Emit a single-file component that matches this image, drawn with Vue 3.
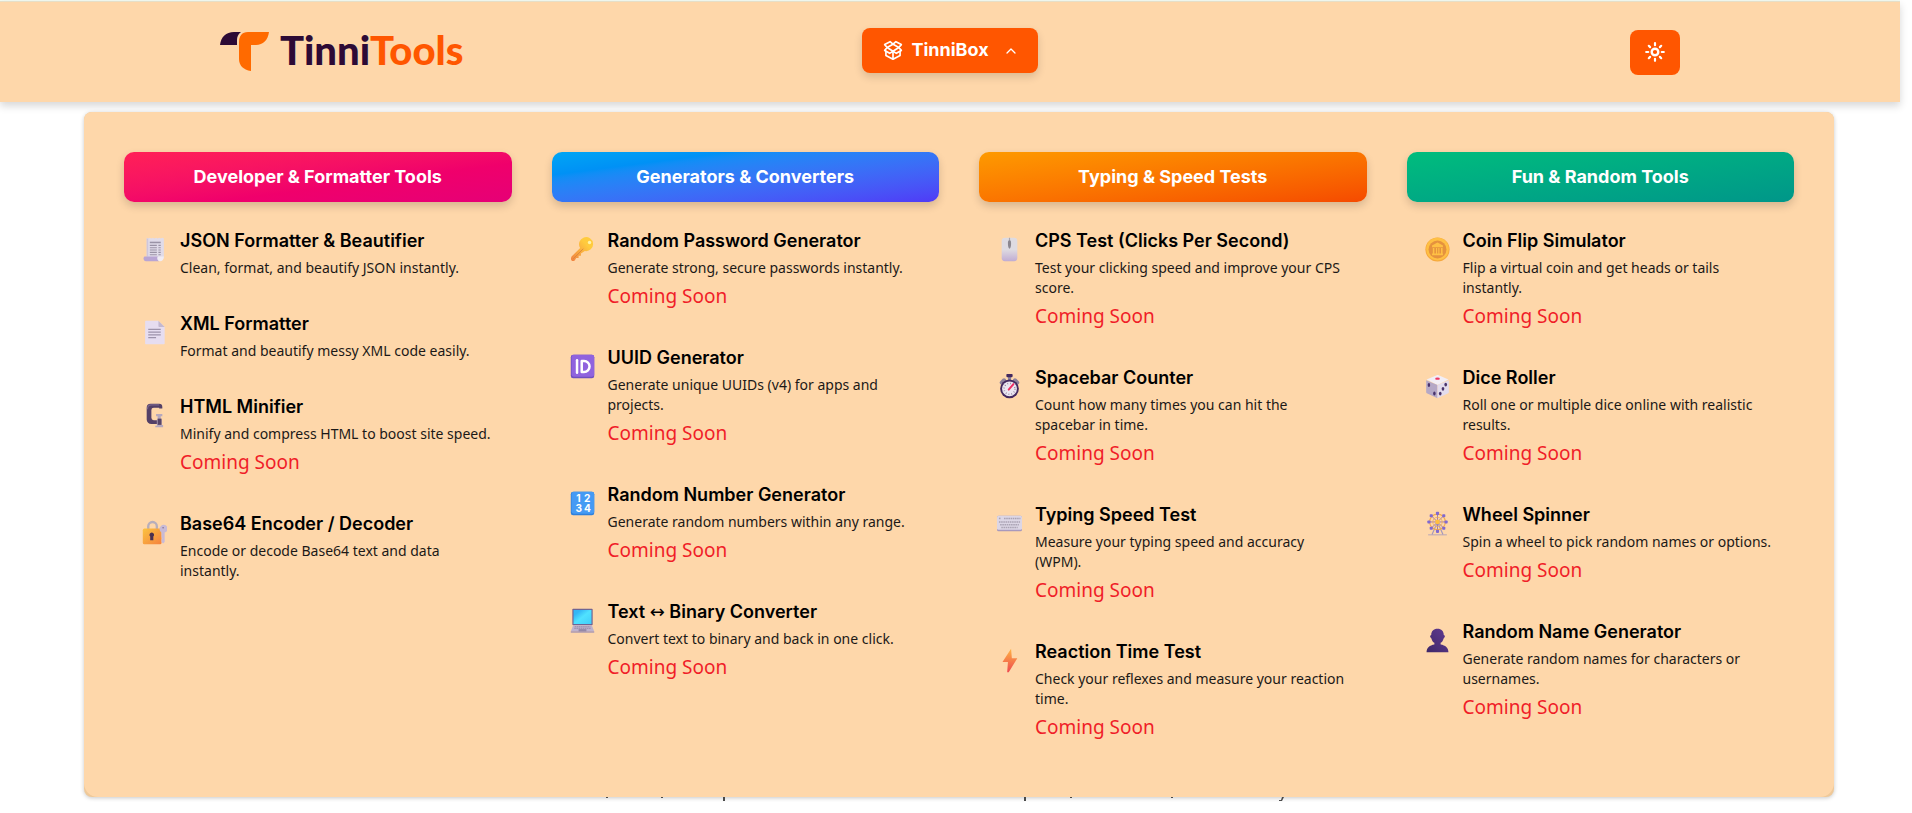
<script setup>
import { ref } from 'vue'

const open = ref(true)

const icons = {
  scroll: `
    <path d="M6 1l2 1 2-1 2 1 2-1 2 1 2-1 2 1 2-1 2 1 2-1 2 1v23a4 4 0 0 1-4 4H6z" fill="#e0dbe9"/>
    <path d="M6 2h2v23H6z" fill="#cfc6dc"/>
    <g fill="#9a93a6"><path d="M10 6h14v2H10z"/><path d="M10 10h9v1.4h-9zM21 10h3v1.4h-3zM10 13h9v1.4h-9zM21 13h3v1.4h-3zM10 16h9v1.4h-9zM21 16h3v1.4h-3zM10 19h9v1.4h-9zM21 19h3v1.4h-3zM10 22h9v1.4h-9zM21 22h3v1.4h-3z"/></g>
    <path d="M3 25h18a4 4 0 0 0 1 6H6a3.500 3.500 0 0 1-3-6z" fill="#b9a5d4"/>
    <path d="M20 25h8c0 4-2 6-5 6s-4-3-3-6z" fill="#f0ecf5"/>`,
  page: `
    <path d="M4 2a1 1 0 0 1 1-1h16l8 8v21a1 1 0 0 1-1 1H5a1 1 0 0 1-1-1z" fill="#e6ddf0"/>
    <path d="M21 1l8 8h-7a1 1 0 0 1-1-1z" fill="#c3b8d0"/>
    <path d="M8 12h16M8 15.500h16M8 19h16M8 22.500h10" stroke="#9d93ab" stroke-width="1.500"/>`,
  clamp: `
    <path d="M26 7V5a4 4 0 0 0-4-4H11a5 5 0 0 0-5 5v15a6 6 0 0 0 6 6h10v-5h-7a3 3 0 0 1-3-3V9a3 3 0 0 1 3-3h7v1z" fill="#544067"/>
    <path d="M7 8c0-3 2-5.500 5-5.500h10" stroke="#7a648c" stroke-width="1.500" fill="none"/>
    <path d="M18 14h8v3h-2v4h1v7h2v3H17v-2h2v-8h1v-4h-2z" fill="#b6a8bd"/>
    <path d="M20 20h5v8h-5z" fill="#574568"/>`,
  lock: `
    <path d="M8 13V8a5.500 5.500 0 0 1 11 0v5" fill="none" stroke="#b7aebb" stroke-width="3"/>
    <rect x="1" y="11" width="24" height="20" rx="2" fill="url(#tb-lock)"/>
    <path d="M24 8a5 5 0 1 1 5 8v12l-2 2-2-2v-3l1-1-1-2v-6a5 5 0 0 1-1-8z" fill="#c8bad6"/><circle cx="27" cy="10" r="1" fill="#7e6e91"/>
    <path d="M12.500 16a3 3 0 0 1 2 5.200V26h-4v-4.800a3 3 0 0 1 2-5.200z" fill="#4b304f"/>`,
  key: `
    <path d="M13 14L2 25c-1 2-1 4 0 5 1 1 3 1 4 0l2-3h3v-3h3v-3l5-3a9 9 0 1 0-6-4z" fill="url(#tb-key)"/>
    <circle cx="25" cy="7" r="2.200" fill="#fff2a8"/><path d="M4 28L17 15" stroke="#d6803d" stroke-width="1"/>`,
  id: `
    <rect x="1" y="1" width="30" height="30" rx="3" fill="#6f4fc0"/><rect x="2" y="1" width="29" height="28" rx="3" fill="#9063de"/>
    <path d="M9 8v16" stroke="#fff" stroke-width="3.200" stroke-linecap="round"/>
    <path d="M15 9h3a7 7 0 0 1 0 14h-3z" stroke="#fff" stroke-width="3.200" stroke-linejoin="round" fill="none"/>`,
  numbers: `
    <rect x="1" y="1" width="30" height="30" rx="3" fill="#2f80dc"/><rect x="2" y="1" width="29" height="28" rx="3" fill="#459af4"/>
    <g fill="#fff" font-family="Inter, sans-serif" font-weight="700" font-size="13"><text x="8" y="14">1</text><text x="18" y="14">2</text><text x="7" y="27">3</text><text x="18" y="27">4</text></g>`,
  laptop: `
    <rect x="3" y="1" width="26" height="21" rx="1" fill="#71608f"/><rect x="4.500" y="2.500" width="23" height="18" fill="url(#tb-screen)"/>
    <path d="M4 22h24l3 8H1z" fill="#bfb3cd"/><path d="M1 30h30v1.500H1z" fill="#9b8cb0"/>
    <path d="M6 24h20M5.500 26h21" stroke="#8f83a0" stroke-width="1" stroke-dasharray="2 .7"/><path d="M11 27h10v3H11z" fill="#9588a6"/>`,
  mouse: `
    <rect x="6" y="1" width="20" height="30" rx="4" fill="url(#tb-mouse)"/>
    <path d="M16 1v13" stroke="#aaa5ae" stroke-width="1.500"/><path d="M16 4c2 0 2 2 2 5s-1 6-2 6-2-3-2-6 0-5 2-5z" fill="#8b878f"/>`,
  stopwatch: `
    <path d="M6 11l3-3M26 11l-3-3" stroke="#8d819b" stroke-width="5" stroke-linecap="round"/>
    <path d="M14 3h4v6h-4z" fill="#8d819b"/><rect x="12" y="0" width="8" height="4" rx="1" fill="#44295f"/>
    <circle cx="16" cy="19" r="12" fill="#44295f"/><circle cx="16" cy="19" r="9.500" fill="#ebe6f1"/>
    <circle cx="16" cy="19" r="7" fill="none" stroke="#8d819b" stroke-width="2" stroke-dasharray="1 2.670"/>
    <path d="M15 20l6-7" stroke="#ef2d63" stroke-width="2.500" stroke-linecap="round"/>`,
  keyboard: `
    <rect x="0" y="6" width="32" height="20" rx="2" fill="#a899bd"/><rect x="0" y="6" width="32" height="18" rx="2" fill="#dcd6e5"/>
    <g stroke="#aaa3b4" stroke-width="2" stroke-dasharray="2 .8"><path d="M9 9.500h21M2.500 14h27M4 17.500h24M5.500 21h21"/></g><path d="M2.500 9.500h2" stroke="#aaa3b4" stroke-width="2"/>`,
  bolt: `<path d="M18 1L7 18h7l-1 13h2l11-18h-7z" fill="url(#tb-bolt)"/>`,
  coin: `
    <circle cx="16" cy="16" r="15.500" fill="#f6a83c"/><circle cx="16" cy="15.500" r="14.500" fill="#ffc044"/><circle cx="16" cy="16" r="11.500" fill="#e5923e"/>
    <path d="M16 7l7 4v2H9v-2zM10 14h2v7h-2zM14 14h1.500v7H14zM17 14h1.500v7H17zM20.500 14h2v7h-2zM9 21h14v2.500H9z" fill="#ffc044"/>`,
  dice: `
    <path d="M15 1.500c1-.5 1.500-.5 2.500 0L30 7l-14 7L2 7z" fill="#f2eef6"/>
    <path d="M1.500 8L16 14v17L3 25c-1-.5-1.500-1-1.500-2z" fill="#b5a8c6"/><path d="M30.500 8L16 14v17l13-6c1-.5 1.500-1 1.500-2z" fill="#e3dced"/>
    <ellipse cx="16" cy="6" rx="3" ry="1.500" fill="#ef3862"/>
    <g fill="#49336c"><ellipse cx="5" cy="14" rx="1.600" ry="2.500"/><ellipse cx="12" cy="25" rx="1.600" ry="2.500"/><ellipse cx="26.500" cy="13.500" rx="1.700" ry="2.400"/><ellipse cx="23" cy="19" rx="1.700" ry="2.400"/><ellipse cx="19.500" cy="25" rx="1.700" ry="2.400"/></g>`,
  wheel: `
    <path d="M16 14L9 30M16 14l7 16" stroke="#a497bd" stroke-width="1.500"/><path d="M4 30.500h24" stroke="#a497bd" stroke-width="1"/>
    <g stroke="#8964ad" stroke-width="1"><path d="M16 3v22M5 14h22M8 6l16 16M24 6L8 22"/></g>
    <circle cx="16" cy="14" r="10" fill="none" stroke="#f3ad4a" stroke-width="1.500"/><circle cx="16" cy="14" r="6" fill="none" stroke="#f0b256" stroke-width="1"/><circle cx="16" cy="14" r="3" fill="#ffbf3f"/>
    <g fill="#8069d1"><rect x="14" y="1" width="4" height="4" rx="1"/><rect x="14" y="24" width="4" height="4" rx="1"/><rect x="3" y="12" width="4" height="4" rx="1"/><rect x="25" y="12" width="4" height="4" rx="1"/><rect x="6" y="4" width="4" height="4" rx="1"/><rect x="22" y="4" width="4" height="4" rx="1"/><rect x="6" y="20" width="4" height="4" rx="1"/><rect x="22" y="20" width="4" height="4" rx="1"/></g>`,
  person: `
    <path d="M2 31c0-6 4-9 10-10v-2c-2-1-3-3-4-6-2-1-2-4 0-4 0-5 3-8 8-8s8 3 8 8c2 0 2 3 0 4-1 3-2 5-4 6v2c6 1 10 4 10 10z" fill="url(#tb-person)"/>`,
}

const groups = [
  {
    title: 'Developer & Formatter Tools',
    tone: 'rose',
    tools: [
      { icon: 'scroll', name: 'JSON Formatter & Beautifier', text: 'Clean, format, and beautify JSON instantly.' },
      { icon: 'page', name: 'XML Formatter', text: 'Format and beautify messy XML code easily.' },
      { icon: 'clamp', name: 'HTML Minifier', text: 'Minify and compress HTML to boost site speed.', soon: true },
      { icon: 'lock', name: 'Base64 Encoder / Decoder', text: 'Encode or decode Base64 text and data instantly.' },
    ],
  },
  {
    title: 'Generators & Converters',
    tone: 'sky',
    tools: [
      { icon: 'key', name: 'Random Password Generator', text: 'Generate strong, secure passwords instantly.', soon: true },
      { icon: 'id', name: 'UUID Generator', text: 'Generate unique UUIDs (v4) for apps and projects.', soon: true },
      { icon: 'numbers', name: 'Random Number Generator', text: 'Generate random numbers within any range.', soon: true },
      { icon: 'laptop', name: 'Text ↔ Binary Converter', text: 'Convert text to binary and back in one click.', soon: true },
    ],
  },
  {
    title: 'Typing & Speed Tests',
    tone: 'amber',
    tools: [
      { icon: 'mouse', name: 'CPS Test (Clicks Per Second)', text: 'Test your clicking speed and improve your CPS score.', soon: true },
      { icon: 'stopwatch', name: 'Spacebar Counter', text: 'Count how many times you can hit the spacebar in time.', soon: true },
      { icon: 'keyboard', name: 'Typing Speed Test', text: 'Measure your typing speed and accuracy (WPM).', soon: true },
      { icon: 'bolt', name: 'Reaction Time Test', text: 'Check your reflexes and measure your reaction time.', soon: true },
    ],
  },
  {
    title: 'Fun & Random Tools',
    tone: 'emerald',
    tools: [
      { icon: 'coin', name: 'Coin Flip Simulator', text: 'Flip a virtual coin and get heads or tails instantly.', soon: true },
      { icon: 'dice', name: 'Dice Roller', text: 'Roll one or multiple dice online with realistic results.', soon: true },
      { icon: 'wheel', name: 'Wheel Spinner', text: 'Spin a wheel to pick random names or options.', soon: true },
      { icon: 'person', name: 'Random Name Generator', text: 'Generate random names for characters or usernames.', soon: true },
    ],
  },
]

// Splits a name so that the arrow can be set in a lighter face
const nameParts = (name) => name.split(/(↔)/)
</script>

<template>
  <div class="page">
    <svg class="defs" width="0" height="0" aria-hidden="true">
      <defs>
        <linearGradient id="tb-lock" x1="0" y1="0" x2="1" y2="1"><stop stop-color="#fbc340" /><stop offset="1" stop-color="#f5823f" /></linearGradient>
        <linearGradient id="tb-key" x1="1" y1="0" x2="0" y2="1"><stop offset=".3" stop-color="#ffcb3d" /><stop offset="1" stop-color="#f08042" /></linearGradient>
        <linearGradient id="tb-screen" x1="0" y1="0" x2="1" y2="1"><stop offset=".2" stop-color="#33b7f5" /><stop offset=".5" stop-color="#50e2ff" /><stop offset="1" stop-color="#42cdfa" /></linearGradient>
        <linearGradient id="tb-mouse" x1="0" y1="0" x2="0" y2="1"><stop offset=".5" stop-color="#dedbe1" /><stop offset="1" stop-color="#c0acd3" /></linearGradient>
        <linearGradient id="tb-bolt" x1="0" y1="0" x2="0" y2="1"><stop stop-color="#ffb443" /><stop offset="1" stop-color="#ee4950" /></linearGradient>
        <linearGradient id="tb-person" x1="1" y1="0" x2="0" y2="1"><stop stop-color="#633b92" /><stop offset="1" stop-color="#3e2768" /></linearGradient>
      </defs>
    </svg>

    <header class="topbar">
      <div class="topbar-inner">
        <a class="logo" href="#" aria-label="TinniTools">
          <svg width="50" height="40" viewBox="0 0 50 40" aria-hidden="true">
            <path d="M0 13C1 5 6 0 14 0h7c-3 2-4 5-4 8v5z" fill="#2d0a35" />
            <path d="M19 10C19 4 22 0 28 0h21c-1 8-6 13-13 13h-5v26c-8-1-12-6-12-12z" fill="#ff6a00" />
          </svg>
          <span class="logo-text">Tinni<span class="logo-accent">Tools</span></span>
        </a>
        <nav class="nav">
          <button class="box-button" type="button" :aria-expanded="open" @click="open = !open">
            <svg width="20" height="20" viewBox="0 0 24 24" fill="none" stroke="currentColor" stroke-width="2" stroke-linejoin="round" stroke-linecap="round" aria-hidden="true">
              <path d="M12 5l7 4-7 4.500L5 9z" />
              <path d="M12 5L8.500 2 2 5.500 5 9l-3 3.500 6 3.500 4-2.500 4 2.500 6-3.500L19 9l3-3.500L15.500 2z" />
              <path d="M3.500 13.500v5L12 23l8.500-4.500v-5M12 13.500V23" />
            </svg>
            <span>TinniBox</span>
            <svg class="caret" width="12" height="12" viewBox="0 0 12 12" fill="none" stroke="currentColor" stroke-width="1.300" stroke-linecap="round" stroke-linejoin="round" aria-hidden="true">
              <path d="M2 9l4-4 4 4" />
            </svg>
          </button>
        </nav>
        <button class="theme-button" type="button" aria-label="Toggle theme">
          <svg width="20" height="20" viewBox="0 0 20 20" fill="none" stroke="currentColor" stroke-linecap="round" aria-hidden="true">
            <circle cx="10" cy="10" r="3.300" stroke-width="2.400" />
            <path d="M10 1.200v2M10 16.800v2M1.200 10h2M16.800 10h2M3.800 3.800l1.300 1.300M14.900 14.900l1.300 1.300M3.800 16.200l1.300-1.300M14.900 5.100l1.300-1.300" stroke-width="2.200" />
          </svg>
        </button>
      </div>
    </header>

    <main>
      <div v-if="open" class="panel">
        <div class="panel-inner">
          <section v-for="group in groups" :key="group.title" class="group">
            <h2 class="pill" :class="group.tone">{{ group.title }}</h2>
            <ul class="tools">
              <li v-for="tool in group.tools" :key="tool.name">
                <a class="tool" href="#">
                  <svg class="tool-icon" viewBox="0 0 32 32" aria-hidden="true" v-html="icons[tool.icon]"></svg>
                  <span class="tool-body">
                    <span class="tool-name"><span v-for="(part, i) in nameParts(tool.name)" :key="i" :class="{ arrow: part === '↔' }">{{ part }}</span></span>
                    <span class="tool-text">{{ tool.text }}</span>
                    <span v-if="tool.soon" class="soon">Coming Soon</span>
                  </span>
                </a>
              </li>
            </ul>
          </section>
        </div>
      </div>
      <!-- Descender tips of the intro line that the open menu covers -->
      <svg class="tips" width="690" height="6" viewBox="0 0 690 6" aria-hidden="true">
        <path d="M1 0h2v1H1zM56 0h2v1h-2zM118 0h2v4h-2zM419 0h2v4h-2zM465 0h2v1h-2zM566 0h2v1h-2zM677 0h2l-2 4h-3v-1h2z" fill="#4a4a4a" />
      </svg>
    </main>
  </div>
</template>

<style>
body {
  background: #fff;
}
</style>

<style scoped>
.page {
  border-top: 1px solid #f3fbf2;
  margin-right: 12px;
  font-family: "Noto Sans", "Open Sans", sans-serif;
  color: #000;
}
.defs {
  position: absolute;
}
.topbar {
  border-top: 1px solid #e6dfc8;
  background: #fed7aa;
  box-shadow: 0 4px 8px rgba(0, 0, 0, 0.16);
}
.topbar-inner {
  display: grid;
  grid-template-columns: 1fr auto 1fr;
  align-items: center;
  max-width: 1460px;
  height: 100px;
  margin: 0 auto;
}
.logo {
  display: flex;
  align-items: flex-start;
  gap: 10px;
  text-decoration: none;
}
.logo-text {
  font: 900 40px/36px Lato, sans-serif;
  color: #2d0a35;
}
.logo-accent {
  color: #ff5600;
}
.nav {
  padding-bottom: 4px;
}
.box-button,
.theme-button {
  display: flex;
  align-items: center;
  justify-content: center;
  height: 45px;
  border: 0;
  border-radius: 8px;
  background: #ff5600;
  color: #fff;
  cursor: pointer;
}
.box-button {
  gap: 8px;
  padding: 0 21px;
  font: 700 18px/28px Inter, sans-serif;
  box-shadow: 0 4px 8px rgba(0, 0, 0, 0.14);
}
.caret {
  margin-left: 8px;
}
.theme-button {
  justify-self: end;
  width: 50px;
  padding: 0;
}
.panel {
  margin: 10px 66px 0 84px;
  border-radius: 8px;
  background: #efc999;
  box-shadow: 0 1px 4px rgba(0, 0, 0, 0.22);
}
.panel-inner {
  display: grid;
  grid-template-columns: repeat(4, minmax(0, 1fr));
  gap: 40px;
  padding: 40px 40px 42px;
  border-radius: 8px 8px 14px 14px;
  background: #fed7aa;
}
.pill {
  margin: 0 0 13px;
  padding: 11px 16px;
  border-radius: 10px;
  font: 700 18px/28px Inter, sans-serif;
  text-align: center;
  color: #fff;
  box-shadow: 0 4px 8px rgba(0, 0, 0, 0.16);
}
.rose {
  background: linear-gradient(to bottom right in oklab, oklch(64.5% 0.246 16.439), oklch(59.2% 0.249 0.584));
}
.sky {
  background: linear-gradient(to bottom right in oklab, oklch(68.5% 0.169 237.323), oklch(51.1% 0.262 276.966));
}
.amber {
  background: linear-gradient(to bottom right in oklab, oklch(76.9% 0.188 70.08), oklch(64.6% 0.222 41.116));
}
.emerald {
  background: linear-gradient(to bottom right in oklab, oklch(69.6% 0.17 162.48), oklch(60% 0.118 184.704));
}
.tools {
  display: flex;
  flex-direction: column;
  gap: 8px;
  margin: 0;
  padding: 0;
  list-style: none;
}
.tool {
  display: flex;
  align-items: flex-start;
  gap: 13px;
  padding: 12px 16px 12px 18px;
  color: inherit;
  text-decoration: none;
}
.tool-icon {
  flex: none;
  width: 25px;
  height: 25px;
  margin-top: 10px;
}
.tool-body {
  display: flex;
  flex-direction: column;
}
.tool-name {
  font: 600 18px/28px Inter, sans-serif;
  white-space: pre-wrap;
}
.arrow {
  font-family: "DejaVu Sans", sans-serif;
  font-weight: 400;
}
.tool-text {
  margin-top: 3px;
  font-size: 14px;
  line-height: 20px;
  color: #1c1917;
}
.soon {
  margin-top: 2px;
  font-size: 19px;
  line-height: 32px;
  color: #f01d28;
}
.tips {
  display: block;
  margin: 0 auto;
}
</style>
